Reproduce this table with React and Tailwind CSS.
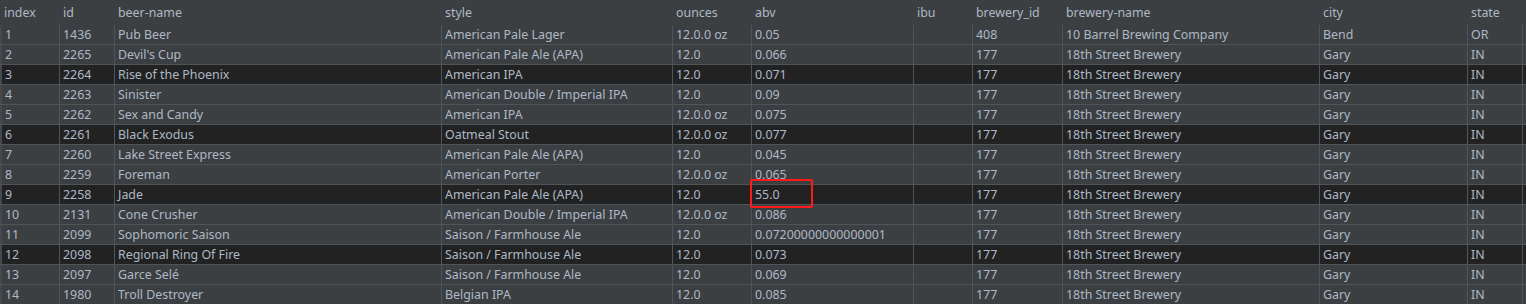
import React from "react";

const COLS = [
  { key: "index", w: "w-[59px]" },
  { key: "id", w: "w-[55px]" },
  { key: "beer-name", w: "w-[327px]" },
  { key: "style", w: "w-[231px]" },
  { key: "ounces", w: "w-[79px]" },
  { key: "abv", w: "w-[162px]" },
  { key: "ibu", w: "w-[59px]" },
  { key: "brewery_id", w: "w-[90px]" },
  { key: "brewery-name", w: "w-[257px]" },
  { key: "city", w: "w-[148px]" },
  { key: "state", w: "w-[55px]" },
];

const ROWS = [
  ["1", "1436", "Pub Beer", "American Pale Lager", "12.0.0 oz", "0.05", "", "408", "10 Barrel Brewing Company", "Bend", "OR"],
  ["2", "2265", "Devil's Cup", "American Pale Ale (APA)", "12.0", "0.066", "", "177", "18th Street Brewery", "Gary", "IN"],
  ["3", "2264", "Rise of the Phoenix", "American IPA", "12.0", "0.071", "", "177", "18th Street Brewery", "Gary", "IN"],
  ["4", "2263", "Sinister", "American Double / Imperial IPA", "12.0", "0.09", "", "177", "18th Street Brewery", "Gary", "IN"],
  ["5", "2262", "Sex and Candy", "American IPA", "12.0.0 oz", "0.075", "", "177", "18th Street Brewery", "Gary", "IN"],
  ["6", "2261", "Black Exodus", "Oatmeal Stout", "12.0.0 oz", "0.077", "", "177", "18th Street Brewery", "Gary", "IN"],
  ["7", "2260", "Lake Street Express", "American Pale Ale (APA)", "12.0", "0.045", "", "177", "18th Street Brewery", "Gary", "IN"],
  ["8", "2259", "Foreman", "American Porter", "12.0.0 oz", "0.065", "", "177", "18th Street Brewery", "Gary", "IN"],
  ["9", "2258", "Jade", "American Pale Ale (APA)", "12.0", "55.0", "", "177", "18th Street Brewery", "Gary", "IN"],
  ["10", "2131", "Cone Crusher", "American Double / Imperial IPA", "12.0.0 oz", "0.086", "", "177", "18th Street Brewery", "Gary", "IN"],
  ["11", "2099", "Sophomoric Saison", "Saison / Farmhouse Ale", "12.0", "0.07200000000000001", "", "177", "18th Street Brewery", "Gary", "IN"],
  ["12", "2098", "Regional Ring Of Fire", "Saison / Farmhouse Ale", "12.0", "0.073", "", "177", "18th Street Brewery", "Gary", "IN"],
  ["13", "2097", "Garce Selé", "Saison / Farmhouse Ale", "12.0", "0.069", "", "177", "18th Street Brewery", "Gary", "IN"],
  ["14", "1980", "Troll Destroyer", "Belgian IPA", "12.0", "0.085", "", "177", "18th Street Brewery", "Gary", "IN"],
];

export default function App() {
  return (
    <div
      className="relative w-[1526px] h-[304px] overflow-hidden bg-[#3c3f41] text-[#adb9c6] text-[12.4px] leading-none"
      style={{ fontFamily: '"Noto Sans", "Noto Sans CJK SC", sans-serif' }}
    >
      {/* header */}
      <div className="flex h-[25px] items-center">
        {COLS.map((c) => (
          <div key={c.key} className={`${c.w} shrink-0 pl-[4px] pt-[1px] whitespace-nowrap`}>
            {c.key}
          </div>
        ))}
      </div>

      {/* rows */}
      {ROWS.map((r, i) => (
        <div
          key={i}
          className={`flex h-[20px] border-b border-[#505456] ${i % 3 === 2 ? "bg-[#222222]" : ""}`}
        >
          {r.map((v, j) => (
            <div
              key={j}
              className={`${COLS[j].w} shrink-0 flex items-center pl-[3px] pt-[2px] whitespace-nowrap ${
                j === 0 ? "border-l-2 border-l-[#46494b]" : "border-l border-[#505456]"
              }`}
            >
              {v}
            </div>
          ))}
          <div className="flex-1 border-l border-[#505456]" />
        </div>
      ))}

      {/* highlight box */}
      <div className="absolute left-[750px] top-[179px] w-[63px] h-[29px] border-2 border-[#ff1a1a] rounded-[2px]" />
    </div>
  );
}
